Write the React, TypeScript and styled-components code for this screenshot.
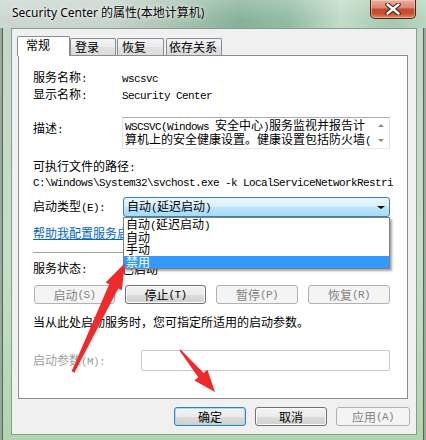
import React from "react";
import styled, { createGlobalStyle } from "styled-components";

const Global = createGlobalStyle`
  html, body { margin: 0; padding: 0; }
  body {
    width: 426px; height: 440px; overflow: hidden;
    font-family: "Noto Sans CJK SC", "Noto Sans", sans-serif;
    font-size: 12px; color: #000;
  }
`;

const Desktop = styled.div`
  position: relative;
  width: 426px;
  height: 440px;
  overflow: hidden;
  display: flex;
  flex-direction: column;
  background:
    linear-gradient(90deg, #9aa79f 0 2px, #56655c 2px 3px, transparent 3px 423px, #56655c 423px 424px, #9aa79f 424px),
    linear-gradient(180deg, #c3d6c8 0%, #c4e0c4 60%, #b0d6ac 100%);
`;

const TitleBar = styled.div`
  height: 28px;
  flex-shrink: 0;
  display: flex;
  align-items: flex-start;
  background:
    linear-gradient(180deg, rgba(255, 255, 255, 0.22) 0%, rgba(255, 255, 255, 0) 70%),
    linear-gradient(90deg, #cdd7d1 0%, #c8d4cc 25%, #a8c3b1 42%, #86b29a 56%, #94bca4 68%, #c3dcc8 80%, #a7c9b0 92%, #b9d6c0 100%);
`;

const Title = styled.div`
  margin: 5px 0 0 12px;
  font-family: "Noto Sans", "Noto Sans CJK SC", sans-serif;
  font-size: 12px;
  line-height: 16px;
  white-space: nowrap;
  text-shadow: 0 0 6px rgba(255, 255, 255, 0.95), 0 0 2px rgba(255, 255, 255, 0.9);
`;

const CloseBtn = styled.div`
  margin-left: auto;
  margin-right: 10px;
  width: 46px;
  height: 19px;
  box-sizing: border-box;
  border: 1px solid #4b1f17;
  border-top: none;
  border-radius: 0 0 5px 5px;
  background: linear-gradient(180deg, #e9ae9f 0%, #dc8770 42%, #c54a30 52%, #c9502f 75%, #dd8a66 100%);
  box-shadow: inset 0 0 0 1px rgba(255, 225, 215, 0.45);
  display: flex;
  align-items: center;
  justify-content: center;
`;

const Client = styled.div`
  flex: 1;
  margin: 0 9px 5px 11px;
  box-sizing: border-box;
  border: 1px solid #8a9a92;
  background: #f0f0f0;
  padding: 7px 8px 0 6px;
  display: flex;
  flex-direction: column;
`;

const TabStrip = styled.div`
  display: flex;
  align-items: flex-end;
  height: 19px;
  margin-left: -1px;
  flex-shrink: 0;
`;

const Tab = styled.div<{ $active?: boolean; $w: number; $pl: number; $ml?: number }>`
  box-sizing: border-box;
  width: ${(p) => p.$w}px;
  margin-left: ${(p) => p.$ml ?? 0}px;
  height: ${(p) => (p.$active ? 20 : 17)}px;
  margin-bottom: ${(p) => (p.$active ? -1 : 0)}px;
  padding: 1px 0 0 ${(p) => p.$pl}px;
  border: 1px solid #898c95;
  border-bottom: none;
  border-radius: 2px 2px 0 0;
  background: ${(p) =>
    p.$active
      ? "#ffffff"
      : "linear-gradient(180deg, #f5f5f5 0%, #ececec 50%, #e1e1e1 51%, #dcdcdc 100%)"};
  position: relative;
  z-index: ${(p) => (p.$active ? 2 : 1)};
  line-height: 14px;
  white-space: nowrap;
`;

const Panel = styled.div`
  position: relative;
  z-index: 1;
  height: 344px;
  box-sizing: border-box;
  flex-shrink: 0;
  border: 1px solid #898c95;
  background: #fff;
  padding-left: 14px;
  display: flex;
  flex-direction: column;
`;

const Row = styled.div<{ $mt: number; $h: number; $top?: boolean }>`
  display: flex;
  align-items: ${(p) => (p.$top ? "flex-start" : "center")};
  margin-top: ${(p) => p.$mt}px;
  height: ${(p) => p.$h}px;
  flex-shrink: 0;
`;

const Label = styled.div<{ $disabled?: boolean; $pt?: number }>`
  width: 89px;
  flex-shrink: 0;
  white-space: nowrap;
  line-height: 16px;
  padding-top: ${(p) => p.$pt ?? 0}px;
  color: ${(p) => (p.$disabled ? "#a0a0a0" : "#000")};
`;

const Text = styled.div`
  line-height: 16px;
  white-space: nowrap;
`;

const Half = styled.span`
  font-family: "Liberation Mono", monospace;
  font-size: 11px;
  letter-spacing: -0.6px;
`;

const DescBox = styled.div`
  width: 268px;
  height: 32px;
  box-sizing: border-box;
  border: 1px solid;
  border-color: #abadb3 #dbdfe6 #e3e9ef #e2e3ea;
  background: #fff;
  display: flex;
`;

const DescText = styled.div`
  flex: 1;
  padding: 1px 0 0 2px;
  line-height: 11px;
  overflow: hidden;
  white-space: nowrap;
`;

const ScrollBar = styled.div`
  width: 17px;
  display: flex;
  flex-direction: column;
  background: #fff;
`;

const ScrollBtn = styled.div`
  flex: 1;
  display: flex;
  align-items: center;
  justify-content: center;
`;

const Tri = styled.div<{ $dir: "up" | "down"; $size: number; $color: string }>`
  width: 0;
  height: 0;
  border-left: ${(p) => p.$size}px solid transparent;
  border-right: ${(p) => p.$size}px solid transparent;
  ${(p) =>
    p.$dir === "up"
      ? `border-bottom: ${Math.ceil(p.$size * 0.67)}px solid ${p.$color};`
      : `border-top: ${Math.ceil(p.$size * 0.67)}px solid ${p.$color};`}
`;

const Combo = styled.div`
  position: relative;
  margin-left: 1px;
  width: 267px;
  height: 20px;
  box-sizing: border-box;
  border: 1px solid #3c7fb1;
  border-radius: 3px;
  background: linear-gradient(180deg, #eaf6fd 0%, #d9f0fc 45%, #bee6fd 50%, #a7d9f5 100%);
  display: flex;
  align-items: center;
  padding-left: 3px;
`;

const ComboText = styled.div`
  flex: 1;
  line-height: 16px;
  white-space: nowrap;
`;

const ComboArrow = styled.div`
  width: 17px;
  display: flex;
  justify-content: center;
`;

const DropList = styled.div`
  position: absolute;
  top: 19px;
  left: -1px;
  width: 267px;
  box-sizing: border-box;
  border: 1px solid #7c7f85;
  background: #fff;
  box-shadow: 2px 2px 2px rgba(0, 0, 0, 0.35);
  z-index: 5;
`;

const DropItem = styled.div<{ $sel?: boolean }>`
  height: 12.5px;
  line-height: 12.5px;
  padding-left: 2px;
  white-space: nowrap;
  background: ${(p) => (p.$sel ? "#3399ff" : "transparent")};
  color: ${(p) => (p.$sel ? "#fff" : "#000")};
`;

const Link = styled.a`
  color: #0066cc;
  text-decoration: underline;
  line-height: 16px;
  white-space: nowrap;
  cursor: pointer;
`;

const Separator = styled.div`
  margin-top: 11px;
  width: 357px;
  height: 1px;
  background: #a0a0a0;
  flex-shrink: 0;
`;

const BtnRow = styled.div<{ $mt: number }>`
  display: flex;
  gap: 10px;
  margin-top: ${(p) => p.$mt}px;
  margin-left: 1px;
  flex-shrink: 0;
`;

const Btn = styled.div<{ $w: number; $variant?: "normal" | "disabled" | "default" }>`
  width: ${(p) => p.$w}px;
  height: 19px;
  box-sizing: border-box;
  border-radius: 3px;
  display: flex;
  align-items: center;
  justify-content: center;
  line-height: 16px;
  white-space: nowrap;
  ${(p) =>
    p.$variant === "disabled"
      ? `border: 1px solid #adb2b5; background: #f4f4f4; color: #838383;`
      : p.$variant === "default"
      ? `border: 1px solid #3c7fb1; color: #000;
         background: linear-gradient(180deg, #f2f2f2 0%, #ebebeb 50%, #dddddd 51%, #cfcfcf 100%);
         box-shadow: inset 0 0 0 1px #a4dcf7;`
      : `border: 1px solid #707070; color: #000;
         background: linear-gradient(180deg, #f2f2f2 0%, #ebebeb 50%, #dddddd 51%, #cfcfcf 100%);
         box-shadow: inset 0 0 0 1px #fbfbfb;`}
`;

const ParamInput = styled.div`
  margin-left: 19px;
  width: 249px;
  height: 21px;
  box-sizing: border-box;
  border: 1px solid #c5c9cc;
  border-radius: 2px;
  background: #fff;
`;

const Footer = styled.div`
  display: flex;
  justify-content: flex-end;
  gap: 9px;
  margin-top: 8px;
  margin-right: -2px;
`;

const Overlay = styled.svg`
  position: absolute;
  left: 0;
  top: 0;
  pointer-events: none;
  z-index: 20;
`;

function Mixed({ text }: { text: string }) {
  const parts = text.match(/[\x20-\x7e]+|[^\x20-\x7e]+/g) || [];
  return (
    <>
      {parts.map((p, i) =>
        /^[\x20-\x7e]/.test(p) ? <Half key={i}>{p}</Half> : <span key={i}>{p}</span>
      )}
    </>
  );
}

export default function App() {
  return (
    <Desktop>
      <Global />
      <TitleBar>
        <Title>Security Center 的属性(本地计算机)</Title>
        <CloseBtn>
          <svg width="16" height="12" viewBox="0 0 16 12">
            <path d="M2.5 1.5 L13.5 10.5 M13.5 1.5 L2.5 10.5" stroke="#3a1a14" strokeWidth="4.4" strokeLinecap="round" />
            <path d="M2.5 1.5 L13.5 10.5 M13.5 1.5 L2.5 10.5" stroke="#ffffff" strokeWidth="2.4" strokeLinecap="round" />
          </svg>
        </CloseBtn>
      </TitleBar>

      <Client>
        <TabStrip>
          <Tab $active $w={53} $pl={8}>常规</Tab>
          <Tab $w={46} $pl={4}>登录</Tab>
          <Tab $w={47} $pl={4} $ml={1}>恢复</Tab>
          <Tab $w={56} $pl={2} $ml={2}>依存关系</Tab>
        </TabStrip>

        <Panel>
          <Row $mt={14} $h={16}>
            <Label><Mixed text="服务名称:" /></Label>
            <Text><Half>wscsvc</Half></Text>
          </Row>
          <Row $mt={1} $h={16}>
            <Label><Mixed text="显示名称:" /></Label>
            <Text><Half>Security Center</Half></Text>
          </Row>
          <Row $mt={14} $h={32} $top>
            <Label $pt={3}><Mixed text="描述:" /></Label>
            <DescBox>
              <DescText>
                <div><Mixed text="WSCSVC(Windows 安全中心)服务监视并报告计" /></div>
                <div><Mixed text="算机上的安全健康设置。健康设置包括防火墙(" /></div>
              </DescText>
              <ScrollBar>
                <ScrollBtn><Tri $dir="up" $size={3} $color="#8a8a8a" /></ScrollBtn>
                <ScrollBtn><Tri $dir="down" $size={3} $color="#8a8a8a" /></ScrollBtn>
              </ScrollBar>
            </DescBox>
          </Row>
          <Row $mt={10} $h={16}>
            <Text><Mixed text="可执行文件的路径:" /></Text>
          </Row>
          <Row $mt={0} $h={14}>
            <Text><Half>C:\Windows\System32\svchost.exe -k LocalServiceNetworkRestri</Half></Text>
          </Row>
          <Row $mt={8} $h={20}>
            <Label><Mixed text="启动类型(E):" /></Label>
            <Combo>
              <ComboText><Mixed text="自动(延迟启动)" /></ComboText>
              <ComboArrow><Tri $dir="down" $size={4} $color="#000" /></ComboArrow>
              <DropList>
                <DropItem><Mixed text="自动(延迟启动)" /></DropItem>
                <DropItem>自动</DropItem>
                <DropItem>手动</DropItem>
                <DropItem $sel>禁用</DropItem>
              </DropList>
            </Combo>
          </Row>
          <Row $mt={8} $h={16}>
            <Link>帮助我配置服务启动选项。</Link>
          </Row>
          <Separator />
          <Row $mt={8} $h={16}>
            <Label><Mixed text="服务状态:" /></Label>
            <Text>已启动</Text>
          </Row>
          <BtnRow $mt={8}>
            <Btn $w={81} $variant="disabled"><Mixed text="启动(S)" /></Btn>
            <Btn $w={81}><Mixed text="停止(T)" /></Btn>
            <Btn $w={82} $variant="disabled"><Mixed text="暂停(P)" /></Btn>
            <Btn $w={82} $variant="disabled"><Mixed text="恢复(R)" /></Btn>
          </BtnRow>
          <Row $mt={10} $h={16}>
            <Text>当从此处启动服务时，您可指定所适用的启动参数。</Text>
          </Row>
          <Row $mt={20} $h={21}>
            <Label $disabled><Mixed text="启动参数(M):" /></Label>
            <ParamInput />
          </Row>
        </Panel>

        <Footer>
          <Btn $w={72} $variant="default">确定</Btn>
          <Btn $w={72}>取消</Btn>
          <Btn $w={74} $variant="disabled"><Mixed text="应用(A)" /></Btn>
        </Footer>
      </Client>

      <Overlay width="426" height="440" viewBox="0 0 426 440">
        <polygon
          fill="#f02a2a"
          points="71.6,371.3 109.2,284.2 105.6,282.5 125,263 121.8,290.3 118.2,288.6 74.4,372.7"
        />
        <polygon
          fill="#f02a2a"
          points="179.4,350.5 198.2,377.3 194.4,380.5 215,392 207.4,369.7 203.6,372.9 180.6,349.5"
        />
      </Overlay>
    </Desktop>
  );
}
